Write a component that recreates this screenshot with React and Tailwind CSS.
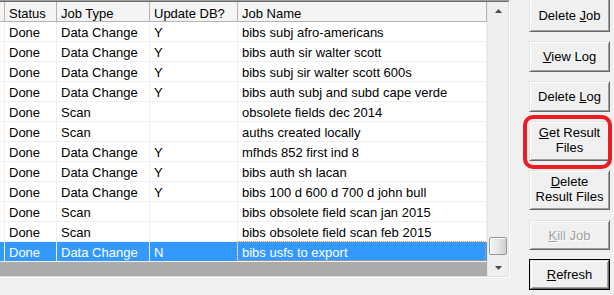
import React from "react";

const rows = [
  ["Done", "Data Change", "Y", "bibs subj afro-americans"],
  ["Done", "Data Change", "Y", "bibs auth sir walter scott"],
  ["Done", "Data Change", "Y", "bibs subj sir walter scott 600s"],
  ["Done", "Data Change", "Y", "bibs auth subj and subd cape verde"],
  ["Done", "Scan", "", "obsolete fields dec 2014"],
  ["Done", "Scan", "", "auths created locally"],
  ["Done", "Data Change", "Y", "mfhds 852 first ind 8"],
  ["Done", "Data Change", "Y", "bibs auth sh lacan"],
  ["Done", "Data Change", "Y", "bibs 100 d 600 d 700 d john bull"],
  ["Done", "Scan", "", "bibs obsolete field scan jan 2015"],
  ["Done", "Scan", "", "bibs obsolete field scan feb 2015"],
  ["Done", "Data Change", "N", "bibs usfs to export"],
];

function HeaderRow() {
  const c = "h-full border-r border-[#b4b4b4] pl-[4px] pt-[4px] leading-[15px] whitespace-nowrap overflow-hidden";
  return (
    <div className="flex h-[20px] border-b border-[#b4b4b4] bg-[#f4f4f4] text-black">
      <div className={"w-[5px] " + c}></div>
      <div className={"w-[52px] " + c}>Status</div>
      <div className={"w-[93px] " + c}>Job Type</div>
      <div className={"w-[88px] " + c}>Update DB?</div>
      <div className={"w-[249px] " + c}>Job Name</div>
    </div>
  );
}

function Row({ r, sel }) {
  const c = "h-full border-r border-[#f0f0f0] pl-[4px] pt-[3px] leading-[15px] whitespace-nowrap overflow-hidden";
  return (
    <div
      className={
        "flex h-[20px] border-b border-[#f0f0f0] " +
        (sel ? "bg-[#3399ff] text-white" : "bg-white text-black")
      }
    >
      <div className={"w-[5px] " + c}></div>
      <div className={"w-[52px] " + c}>{r[0]}</div>
      <div className={"w-[93px] " + c}>{r[1]}</div>
      <div className={"w-[88px] " + c}>{r[2]}</div>
      {sel ? (
        <div className="w-[249px] h-[20px] -mt-px -ml-px border border-dotted border-[#f59a3a] pl-[4px] pt-[3px] leading-[15px] whitespace-nowrap overflow-hidden">
          {r[3]}
        </div>
      ) : (
        <div className={"w-[249px] " + c}>{r[3]}</div>
      )}
    </div>
  );
}

function ScrollBar() {
  return (
    <div className="w-[21px] h-full flex flex-col bg-[#efefef] border-l border-[#e6e6e6]">
      <div className="h-[17px] flex items-center justify-center">
        <svg width="7" height="4" viewBox="0 0 7 4">
          <polygon points="0,4 7,4 3.5,0" fill="#4a4a4a" />
        </svg>
      </div>
      <div className="flex-1 flex flex-col justify-end items-center pb-[4px]">
        <div className="w-[18px] h-[18px] rounded-[2px] border border-[#979797] bg-[linear-gradient(to_right,#f4f4f4,#e6e6e6_50%,#cfcfcf)] shadow-[inset_1px_1px_0_#ffffff]"></div>
      </div>
      <div className="h-[17px] flex items-center justify-center">
        <svg width="7" height="4" viewBox="0 0 7 4">
          <polygon points="0,0 7,0 3.5,4" fill="#4a4a4a" />
        </svg>
      </div>
    </div>
  );
}

function Btn({ children, cls, disabled }) {
  return (
    <div
      className={
        "w-[81px] flex items-center justify-center text-center leading-[15px] bg-[#f0f0f0] border border-t-[#e3e3e3] border-l-[#e3e3e3] border-r-[#696969] border-b-[#696969] shadow-[inset_1px_1px_0_#ffffff,inset_-1px_-1px_0_#a0a0a0] " +
        (disabled ? "text-[#a0a0a0] [text-shadow:1px_1px_0_#ffffff] " : "text-black ") +
        cls
      }
    >
      <div>{children}</div>
    </div>
  );
}

export default function App() {
  return (
    <div className="relative w-[614px] h-[295px] overflow-hidden bg-[#f0f0f0] text-[13px] font-['Liberation_Sans',Arial,sans-serif] flex items-start">
      {/* Grid */}
      <div className="w-[510px] h-[278px] border-t border-t-[#a0a0a0] border-r border-r-white border-b border-b-white">
        <div className="w-full h-full flex border-t border-t-[#696969] border-r border-r-[#e3e3e3] border-b border-b-[#e3e3e3]">
          <div className="w-[487px] h-full flex flex-col">
            <HeaderRow />
            {rows.map((r, i) => (
              <Row key={i} r={r} sel={i === rows.length - 1} />
            ))}
            <div className="flex-1 bg-[#ababab]"></div>
          </div>
          <ScrollBar />
        </div>
      </div>

      {/* Buttons */}
      <div className="ml-[19px] -mt-[2px] w-[81px] flex flex-col">
        <Btn cls="h-[34px]">
          Delete <u>J</u>ob
        </Btn>
        <Btn cls="mt-[9px] h-[31px]">
          <u>V</u>iew Log
        </Btn>
        <Btn cls="mt-[9px] h-[31px]">
          Delete <u>L</u>og
        </Btn>
        <Btn cls="mt-[9px] h-[40px] pb-[3px]">
          <u>G</u>et Result
          <br />
          Files
        </Btn>
        <Btn cls="mt-[9px] h-[40px] pb-[3px]">
          <u>D</u>elete
          <br />
          Result Files
        </Btn>
        <Btn cls="mt-[10px] h-[30px]" disabled>
          <u>K</u>ill Job
        </Btn>
        <div className="mt-[9px] h-[31px] w-[81px] border border-black">
          <Btn cls="w-full h-full">
            <u>R</u>efresh
          </Btn>
        </div>
      </div>

      {/* Red annotation */}
      <div className="absolute left-[523px] top-[115px] w-[89px] h-[54px] border-[4px] border-[#ec1c24] rounded-[10px] pointer-events-none"></div>
    </div>
  );
}
